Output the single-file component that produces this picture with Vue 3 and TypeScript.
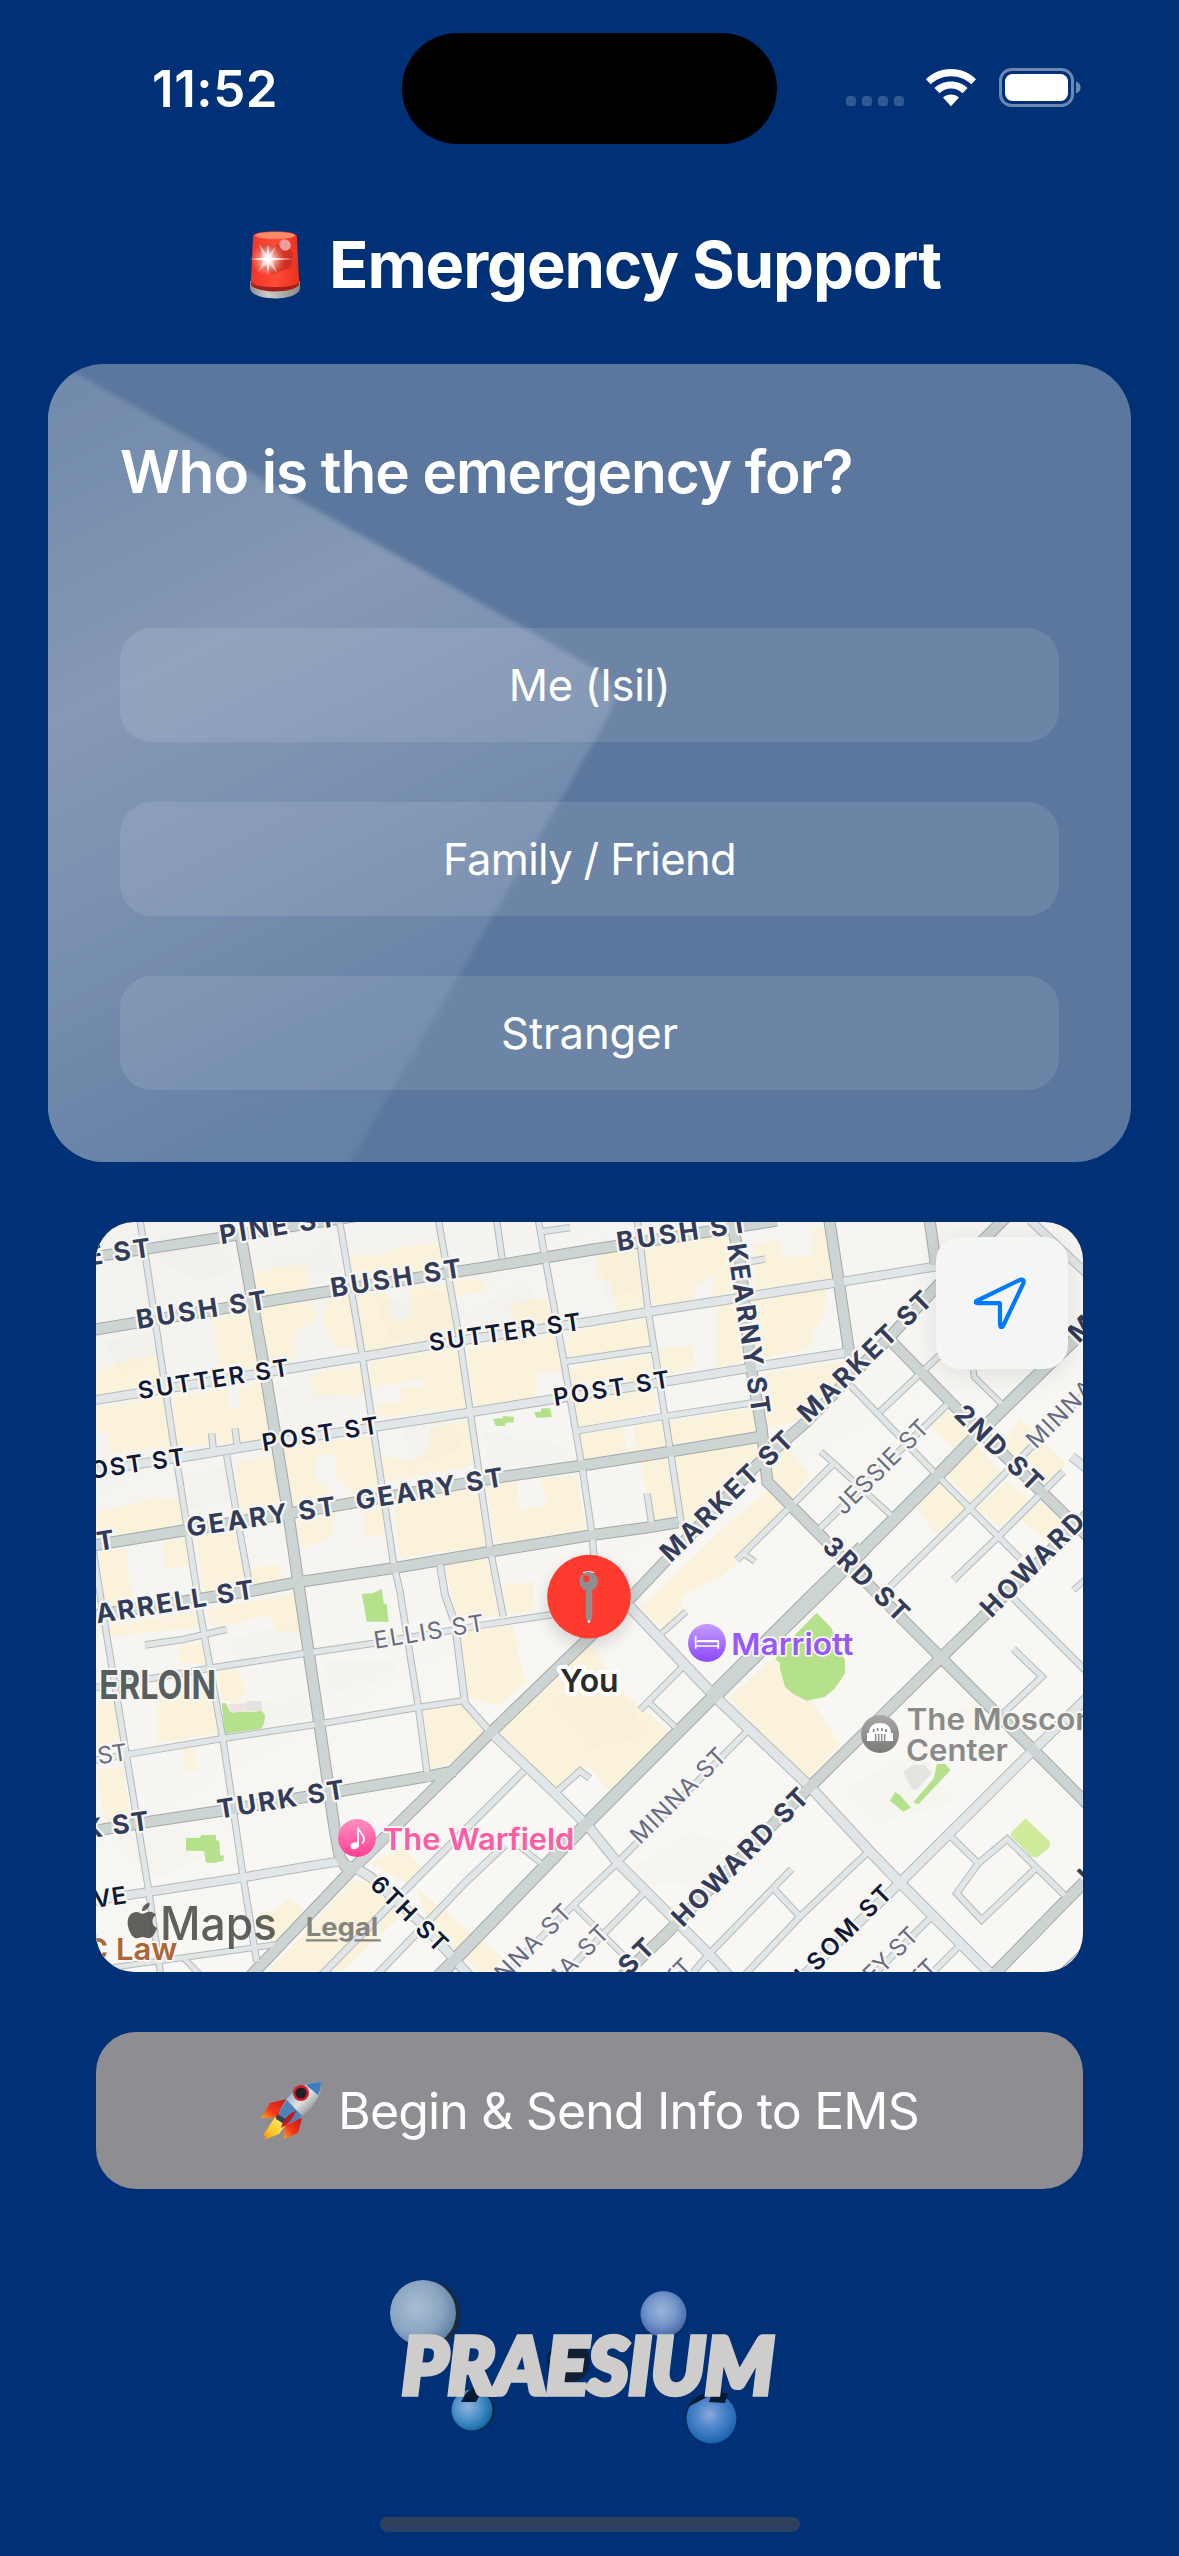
<script setup lang="ts">
type Tier = 'minor' | 'major'
interface Road { d: string; w: number; tier: Tier }
interface Label { t: string; x: number; y: number; a: number; len: number; kind: string }

const options: string[] = ['Me (Isil)', 'Family / Friend', 'Stranger']
const spacing: string[] = ['-.3px', '-.65px', '0px']

// Street geometry, three map units per pixel
const minor: [number, string][] = [
  [28, '0,558 820,425 1040,387 1500,320 1680,290 2240,203 2540,154'],
  [28, '0,770 300,723 500,690 860,635 1140,592 1500,535 1750,496 1970,460 2275,412'],
  [20, '0,1420 200,1388 370,1358 640,1316 850,1285 1180,1230 1420,1194'],
  [20, '0,1638 120,1617 400,1570 680,1528 980,1478 1125,1456'],
  [28, '0,2060 110,2041 460,1987 690,1948 745,1940 790,1958'],
  [18, '0,2268 120,2250 280,2228 560,2188'],
  [18, '280,2228 340,2290'],
  [20, '150,15 250,680 270,800 320,1125 330,1190 360,1355 400,1580 460,1990 500,2240'],
  [20, '748,15 815,410 910,1040 930,1130 985,1475 1015,1700'],
  [20, '1045,15 1110,380 1200,1000 1240,1205'],
  [20, '1220,15 1236,130'],
  [20, '1345,15 1360,100 1420,430 1480,780 1505,950 1515,1060'],
  [20, '365,655 370,705'],
  [20, '435,640 442,692'],
  [20, '410,720 440,900 475,1090'],
  [20, '1355,50 1440,38'],
  [20, '10,1010 45,1230 100,1565 175,2020 213,2285'],
  [20, '165,1290 280,1273 410,1243'],
  [22, '1050,1050 1065,1140 1095,1225 1125,1465 1200,1550'],
  [30, '1200,1550 1400,1740 1500,1840 1580,1940 1860,2220 1925,2290'],
  [32, '1600,1155 1875,1445 2160,1715 2340,1910 2430,2003 2715,2290'],
  [30, '790,1955 840,1985 1000,2130 1145,2290'],
  [20, '1395,1735 1470,1668 1500,1690'],
  [22, '690,2285 980,1990 1300,1670'],
  [22, '855,2285 1130,1998 1245,1890'],
  [18, '1290,1895 1360,1950'],
  [20, '1140,2380 1450,2070 1580,1945 1970,1550'],
  [18, '1450,2070 1610,2230'],
  [20, '1660,2035 1410,2290'],
  [20, '1650,1485 1782,1352'],
  [18, '1680,1465 1765,1545'],
  [18, '1715,1255 1788,1190'],
  [20, '1850,2225 2105,1962'],
  [20, '2050,2020 2130,2105'],
  [20, '1955,2290 2130,2105 2335,1910'],
  [20, '1785,2300 1850,2225'],
  [20, '2520,2110 2340,2290'],
  [20, '2610,2190 2510,2290'],
  [20, '2580,1862 2665,1945 2752,1872 2925,2042'],
  [20, '2665,1945 2600,2035 2675,2115 2835,1962'],
  [20, '2770,1302 2856,1385 2740,1495'],
  [20, '2770,1150 3000,1380'],
  [30, '2080,2340 2430,2003 2810,1625 3000,1440'],
  [18, '2650,465 2652,485 2740,572'],
  [26, '2820,15 3000,185'],
  [20, '2280,510 2540,780 2790,1030'],
  [18, '2192,710 2232,745 2408,905'],
  [20, '2232,745 1940,1035'],
  [18, '1960,1015 1995,1040'],
  [20, '2190,940 2575,565'],
  [20, '2370,590 2550,420'],
  [20, '2400,1115 2640,880 2820,700 3000,520'],
  [20, '2590,1095 2725,965 2920,770'],
  [28, '2945,725 3000,768'],
  [18, '2950,1125 3000,1082'],
  [20, '1640,0 1675,290 1740,700 1774,925'],
  [20, '1980,140 2025,132'],
  [20, '1425,440 1685,402'],
  [20, '1460,648 1730,603 1990,563'],
  [20, '1671,835 1685,925'],
]
const major: [number, string][] = [
  [32, '0,127 180,100 390,68 800,4'],
  [34, '0,346 620,244 1180,158 1500,105 1580,93 2060,17'],
  [34, '0,993 290,945 740,872 1240,785 1500,748 1740,710 2030,662'],
  [34, '0,1203 500,1125 620,1102 920,1058 1200,1010 1500,961 1670,938 1765,922'],
  [34, '0,1850 180,1820 390,1788 760,1727 1030,1681 1095,1668'],
  [34, '450,50 530,500 600,930 628,1125 655,1305 690,1540 735,1850 750,1930 775,1965'],
  [34, '475,2290 790,1960 1100,1655 1200,1555 1630,1140 2000,750 2150,620 2400,365 2540,215 2750,5'],
  [38, '1040,2290 1500,1815 1850,1465 2200,1125 2550,775 2700,620 2900,425 3000,330'],
  [48, '1862,1450 2190,1125 2320,1000'],
  [34, '1590,2290 1730,2155 2150,1725 2553,1328 2700,1185 3000,890'],
  [36, '2700,2290 2925,2060 3000,1985'],
  [34, '1922,10 1950,130 1980,440 2015,640 2032,800 2190,960 2430,1205 2553,1328 2840,1615 3000,1775'],
  [34, '2390,365 2600,580 2920,895 3000,970'],
  [34, '2217,10 2245,190 2280,430'],
  [34, '2518,10 2538,150'],
  [40, '2900,2300 3000,2205'],
]
const toRoad = (tier: Tier) => ([w, d]: [number, string]): Road => ({ w, d, tier })
const roads: Road[] = [...minor.map(toRoad('minor')), ...major.map(toRoad('major'))]

const blocks: string[] = [
  '495,170 650,145 655,215 740,222 500,260', '780,120 870,120 930,95 1050,80 1060,160 790,200',
  '1080,200 1180,190 1180,230 1090,245', '370,310 480,290 520,480 390,500',
  '500,270 670,260 680,310 620,350 615,440 540,460', '705,260 780,240 815,400 740,400 700,330',
  '800,240 890,230 910,315 960,310 960,215 1080,210 1110,370 830,415', '1260,265 1370,250 1400,320 1270,330',
  '18,470 130,430 210,420 225,530 18,560', '18,575 235,545 260,690 60,720 50,650 18,650',
  '250,545 410,520 415,580 450,580 450,515 520,500 545,670 260,700', '660,480 815,450 830,540 670,540',
  '840,440 1110,400 1145,575 860,610 860,570 930,560 935,515 1000,515 1000,490 840,520', '1130,400 1410,350 1430,470 1340,470 1340,550 1155,580',
  '570,700 840,660 880,820 790,840 735,780 735,720 680,720 670,785 735,840 600,870', '860,720 970,740 1020,700 1020,640 1135,615 1160,750 890,800',
  '440,740 550,720 590,880 450,900', '18,890 200,850 280,860 290,930 18,970',
  '25,1010 110,1000 120,1110 150,1180 40,1190', '220,980 285,970 300,1050 225,1060',
  '320,950 430,940 455,1060 560,1050 590,1100 340,1150', '620,920 740,890 720,970 630,1000',
  '820,880 880,870 890,960 820,970', '910,860 1170,820 1200,990 930,1030',
  '1190,810 1280,800 1290,885 1370,870 1350,790 1460,780 1490,950 1215,990', '1065,1050 1190,1030 1230,1200 1100,1220',
  '1240,1110 1335,1100 1330,1190 1250,1200', '1430,460 1680,420 1700,590 1465,640', '1470,660 1600,640 1610,705 1635,700 1630,635 1725,615 1740,690 1480,740',
  '1430,350 1680,310 1685,390 1430,430', '1700,400 1810,390 1815,460 1715,480', '1880,260 2210,220 2200,310 2170,350 2160,400 1880,460',
  '1520,120 1640,100 1660,280 1580,290 1560,200 1520,190', '1650,90 1930,40 1950,230 1860,245 1880,175 1820,210 1810,255 1690,275',
  '1990,90 2070,75 2080,130 2170,120 2165,40 2215,40 2240,190 1990,225', '2020,475 2270,440 2280,480 2170,610 2020,640', '1730,620 1990,580 2000,650 1745,690',
  '1650,740 1730,730 1760,900 1690,920', '1760,720 2000,685 2010,760 1790,960 1770,900',
  '2040,820 2110,880 1960,1030 1900,1080 1780,1140 1770,1180 1800,1180 1715,1240 1650,1180 1920,920', '2090,690 2160,780 2100,860 2030,790',
  '2050,1330 2150,1430 2250,1590 2150,1700 1915,1450', '1230,1550 1500,1290 1600,1430 1750,1560 1560,1735 1500,1660 1470,1655 1395,1725',
  '1115,1250 1270,1230 1290,1340 1310,1400 1230,1470 1130,1450', '1000,1485 1120,1470 1190,1555 1090,1640 1020,1665',
  '380,1365 445,1365 470,1430 440,1465 395,1455', '200,1430 375,1430 390,1555 200,1585', '18,1465 100,1465 110,1565 18,1615',
  '18,1240 160,1215 330,1190 340,1235 140,1255 45,1270', '350,1185 610,1135 630,1250 560,1250 540,1200 410,1230 360,1230',
  '270,1285 340,1285 350,1350 270,1340', '280,1600 315,1605 320,1665 285,1670', '18,1665 100,1655 120,1815 50,1825',
  '840,1945 940,1900 1010,1970 960,2010', '500,2095 560,2085 600,2045 640,2085 560,2180', '790,1995 840,2000 950,2085 750,2275 530,2275',
  '980,2020 1240,2230 1180,2280 1110,2220 1010,2120', '2570,780 2660,690 2750,790 2650,870', '2740,690 2790,610 2930,750 2860,830',
  '2480,880 2550,800 2630,880 2540,960', '2660,880 2750,800 2820,850 2730,940', '2790,910 2850,860 2920,920 2880,990', '2520,630 2560,580 2640,660 2590,700',
]
// Terrain facets give the land its faint relief
const facets: string[] = [
  '200,60 390,90 440,160 330,200 210,140', '520,120 650,130 720,60 740,180 560,170', '40,380 180,350 200,420 90,470',
  '560,520 790,540 820,590 600,650', '860,260 1060,230 1090,330 900,380', '1130,300 1300,200 1380,300 1200,360',
  '300,780 410,760 420,860 300,880', '940,620 1090,590 1110,700 960,760', '1180,650 1420,690 1440,740 1200,760',
  '420,1270 620,1220 630,1310 430,1340', '700,1340 940,1330 900,1390 720,1440', '420,1480 650,1430 660,1510 440,1560',
  '60,1870 260,1840 400,1900 200,1990', '1380,1450 1560,1400 1680,1560 1500,1600', '1560,2000 1800,1850 1960,1900 1820,2010',
  '2250,1730 2480,1600 2600,1760 2350,1830', '2570,1500 2700,1440 2760,1500 2640,1600', '1530,60 1660,140 1640,230 1540,250',
]
const parks: string[] = [
  '1210,612 1238,610 1240,603 1272,606 1270,622 1247,623 1245,633 1217,632', '1332,592 1352,590 1354,580 1380,580 1386,606 1340,609',
  '815,1137 850,1134 875,1122 881,1165 890,1168 896,1220 830,1220 821,1168', '395,1465 408,1465 420,1490 495,1490 515,1487 525,1500 523,1522 515,1540 405,1557',
  '288,1870 330,1868 334,1860 378,1860 378,1875 388,1878 390,1920 402,1922 400,1937 376,1943 348,1943 342,1908 288,1907',
  '2180,1193 2225,1240 2240,1290 2265,1335 2265,1375 2235,1420 2205,1445 2150,1457 2110,1437 2085,1415 2070,1360 2070,1345 2055,1332 2120,1255',
  '2540,1647 2565,1647 2582,1665 2485,1768 2470,1762 2532,1690', '2415,1731 2432,1742 2462,1778 2440,1790 2400,1757',
]

const raw: [string, string, number, number, number, number][] = [
  ['road', 'E ST', -6, 152, 185, 125], ['road', 'PINE ST', 393, 88, 742, 33],
  ['road', 'BUSH ST', 143, 342, 534, 281], ['road', 'BUSH ST', 726, 247, 1118, 186], ['road', 'BUSH ST', 1584, 109, 1977, 50],
  ['dark', 'SUTTER ST', 148, 553, 600, 482], ['dark', 'SUTTER ST', 1021, 409, 1475, 344],
  ['dark', 'POST ST', 520, 709, 868, 655], ['dark', 'OST ST', 3, 792, 288, 750], ['dark', 'POST ST', 1394, 573, 1742, 517],
  ['road', 'GEARY ST', 294, 965, 740, 900], ['road', 'GEARY ST', 802, 885, 1243, 813], ['road', 'T', 25, 1008, 75, 1000],
  ['road', 'ARRELL ST', 22, 1225, 495, 1150], ['light', 'ELLIS ST', 856, 1301, 1185, 1247],
  ['light', 'ST', 26, 1648, 115, 1635], ['road', 'K ST', -16, 1871, 180, 1844], ['road', 'TURK ST', 386, 1811, 767, 1750],
  ['dark', 'VE', 14, 2079, 112, 2064], ['dark', '6TH ST', 836, 2012, 1044, 2216],
  ['light', 'INNA ST', 1227, 2320, 1450, 2097], ['light', 'MA ST', 1385, 2337, 1562, 2160], ['light', 'ST', 1760, 2312, 1812, 2260],
  ['road', 'ST', 1617, 2285, 1699, 2203], ['light', 'MINNA ST', 1650, 1891, 1914, 1628], ['road', 'HOWARD ST', 1778, 2140, 2162, 1752],
  ['dark', 'LSOM ST', 2145, 2308, 2410, 2040], ['light', 'EY ST', 2348, 2308, 2490, 2166], ['light', 'ST', 2493, 2316, 2547, 2262],
  ['road', 'H', 2997, 2012, 3040, 1969], ['road', 'KEARNY ST', 1911, 89, 1986, 600],
  ['road', 'MARKET ST', 2155, 627, 2532, 262], ['road', 'MARKET ST', 1742, 1045, 2116, 682],
  ['light', 'JESSIE ST', 2262, 903, 2522, 643], ['road', '2ND ST', 2588, 603, 2826, 834], ['road', '3RD ST', 2193, 998, 2426, 1226],
  ['road', 'HOWARD', 2704, 1211, 2990, 925], ['light', 'MINNA', 2838, 704, 3018, 524], ['road', 'M', 2966, 387, 3020, 333],
]
const labels: Label[] = raw.map(([kind, t, x, y, x2, y2]) => ({
  kind, t, x, y,
  a: (Math.atan2(y2 - y, x2 - x) * 180) / Math.PI,
  len: Math.hypot(x2 - x, y2 - y),
}))
</script>

<template>
  <div class="screen">
    <header class="status">
      <span class="time">11:52</span>
      <span class="island"></span>
      <span class="signals">
        <svg class="dots" width="58" height="10" viewBox="0 0 58 10">
          <rect v-for="i in 4" :key="i" :x="(i - 1) * 16" y="0" width="10" height="10" rx="3.5" fill="#335990" />
        </svg>
        <svg class="wifi" width="50" height="38" viewBox="0 0 50 38" fill="#fff">
          <path d="M25 0C35 0 44 4 50 10.3l-4.700 5C40 10.300 33 7.200 25 7.200S10 10.300 4.700 15.300L0 10.300C6 4 15 0 25 0Z" />
          <path d="M25 12.500c6.500 0 12.300 2.500 16.500 6.500l-5 5.200c-3-2.800-7-4.600-11.500-4.600s-8.500 1.800-11.500 4.600l-5-5.200c4.200-4 10-6.500 16.500-6.500Z" />
          <path d="M25 25.500c3 0 5.800 1.100 8 3L25 37.300l-8-8.800c2.200-1.900 5-3 8-3Z" />
        </svg>
        <svg class="battery" width="82" height="39" viewBox="0 0 82 39">
          <rect x="1.500" y="1.500" width="72" height="36" rx="11" fill="none" stroke="#6d89b2" stroke-width="3" />
          <rect x="6" y="6" width="63" height="27" rx="7.500" fill="#fff" />
          <path d="M77 13.500c3 1 4.500 3.300 4.500 6s-1.500 5-4.500 6Z" fill="#6d89b2" />
        </svg>
      </span>
    </header>

    <h1 class="title">
      <svg class="siren" width="52" height="68" viewBox="0 0 52 68">
        <defs>
          <linearGradient id="glass" x1="0" y1="0" x2="1" y2="0">
            <stop offset="0" stop-color="#f0352a" /><stop offset=".5" stop-color="#ff4a35" /><stop offset="1" stop-color="#e8321f" />
          </linearGradient>
          <linearGradient id="base" x1="0" y1="0" x2="1" y2="0">
            <stop offset="0" stop-color="#8e8c8b" /><stop offset=".35" stop-color="#cfcdcb" /><stop offset="1" stop-color="#8b8987" />
          </linearGradient>
          <radialGradient id="flare"><stop offset="0" stop-color="#fff" /><stop offset=".35" stop-color="#ffd5d0" stop-opacity=".8" /><stop offset="1" stop-color="#ff8878" stop-opacity="0" /></radialGradient>
        </defs>
        <path d="M1 50h50v7c0 6-11 10.500-25 10.500S1 63 1 57Z" fill="url(#base)" />
        <path d="M2 46h48v7c0 4-11 7.500-24 7.500S2 57 2 53Z" fill="#a5201a" />
        <path d="M4 6C4 2 12 .5 26 .5S48 2 48 6l2 44c0 4-11 6-24 6S2 54 2 50Z" fill="url(#glass)" />
        <ellipse cx="26" cy="4.500" rx="20" ry="3.500" fill="#ff8a68" />
        <path d="M8 20q8-12 18-5l8-5 10 12-2 15-10 3-8 4-12-8Z" fill="#b52a1e" opacity=".6" />
        <ellipse cx="36" cy="14" rx="6" ry="5.500" fill="#f39a9c" transform="rotate(40 36 14)" />
        <circle cx="19" cy="28" r="17" fill="url(#flare)" />
        <path d="M0 28l17-1.500 2-13.500 2 13.500 23 1.500-23 1.500-2 14-2-14Z" fill="#fff" opacity=".8" />
        <path d="M10 13l9 12 8-10-5 12 6 15-9-11-10 10 6-13Z" fill="#fff" opacity=".55" />
      </svg>
      <span>Emergency Support</span>
    </h1>

    <section class="card">
      <svg class="sheen" width="1083" height="798" viewBox="0 0 1083 798">
        <defs>
          <linearGradient id="sheen" gradientUnits="userSpaceOnUse" x1="0" y1="0" x2="345" y2="706">
            <stop offset="0" stop-color="#7089aa" /><stop offset=".2" stop-color="#7990af" /><stop offset=".41" stop-color="#8699b6" />
            <stop offset=".66" stop-color="#7990b0" /><stop offset="1" stop-color="#6581a5" />
          </linearGradient>
          <filter id="feather"><feGaussianBlur stdDeviation="2.500" /></filter>
        </defs>
        <path d="M-20-2L12 0L482 267L542 302Q576 322 563 346L546 378L411 611L303 796L295 820H-20Z" fill="url(#sheen)" filter="url(#feather)" />
      </svg>
      <h2 class="question">Who is the emergency for?</h2>
      <div class="options">
        <button v-for="(o, i) in options" :key="o" class="option" :style="{ letterSpacing: spacing[i] }">{{ o }}</button>
      </div>
    </section>

    <section class="map">
      <svg class="tiles" width="987" height="750" viewBox="18 21 2961 2250">
        <defs>
          <linearGradient id="venue" x1="0" y1="0" x2="0" y2="1"><stop offset="0" stop-color="#ff8fc0" /><stop offset="1" stop-color="#ff3f95" /></linearGradient>
          <linearGradient id="hotel" x1="0" y1="0" x2="0" y2="1"><stop offset="0" stop-color="#c39cff" /><stop offset="1" stop-color="#8d48fa" /></linearGradient>
          <linearGradient id="hall" x1="0" y1="0" x2="0" y2="1"><stop offset="0" stop-color="#aaa8a6" /><stop offset="1" stop-color="#7c7a78" /></linearGradient>
          <linearGradient id="land" x1="0" y1="0" x2=".5" y2=".7"><stop offset="0" stop-color="#f3f2ef" /><stop offset="1" stop-color="#f8f7f3" /></linearGradient>
          <filter id="soft" x="-30%" y="-30%" width="160%" height="160%"><feGaussianBlur stdDeviation="22" /></filter>
        </defs>
        <rect x="0" y="0" width="3000" height="2300" fill="url(#land)" />
        <polygon v-for="b in blocks" :key="b" :points="b" fill="#fbf2dc" />
        <polygon v-for="f in facets" :key="f" :points="f" fill="#8d8870" opacity=".02" />
        <polygon v-for="p in parks" :key="p" :points="p" fill="#b5e08c" />
        <polygon points="2807,1810 2880,1880 2878,1898 2840,1928 2825,1925 2762,1862 2765,1850" fill="#d1eb9c" />
        <polygon points="415,1468 470,1464 472,1485 425,1495" fill="#f0e3e3" />
        <polygon points="470,1458 515,1458 515,1488 470,1488" fill="#e2e3df" />
        <polygon points="2440,1672 2470,1648 2505,1650 2524,1675 2480,1725 2465,1720" fill="#e4e5e1" />

        <g fill="none" stroke-linejoin="miter">
          <polyline v-for="(r, i) in roads" :key="'c' + i" :points="r.d" :stroke-width="r.w + 2" :stroke="r.tier === 'major' ? '#a3a9a9' : '#b4baba'" />
          <polyline v-for="(r, i) in roads" :key="'f' + i" :points="r.d" :stroke-width="r.w - 4" :stroke="r.tier === 'major' ? '#cdd4d4' : '#e1e7e8'" />
        </g>

        <text
          v-for="(l, i) in labels" :key="'l' + i" :class="['street', l.kind]" :x="l.x" :y="l.y"
          :textLength="l.len" :transform="`rotate(${l.a} ${l.x} ${l.y})`"
        >{{ l.t }}</text>

        <text class="area" x="28" y="1452" textLength="350" lengthAdjust="spacingAndGlyphs">ERLOIN</text>

        <g>
          <circle cx="801" cy="1869" r="57" fill="url(#venue)" />
          <ellipse cx="794" cy="1892" rx="13" ry="10" fill="#fff" transform="rotate(-15 794 1892)" />
          <path d="M804 1892V1837c3 16 20 20 18 38-1 6-4 9-6 11" fill="none" stroke="#fff" stroke-width="5.500" />
          <text class="poi" x="879" y="1905" textLength="574" lengthAdjust="spacingAndGlyphs" fill="#fc5da6">The Warfield</text>
        </g>
        <g>
          <circle cx="1851" cy="1284" r="57" fill="url(#hotel)" />
          <path d="M1817 1263v38M1817 1293h68v8M1885 1293v-14" fill="none" stroke="#fff" stroke-width="5" />
          <path d="M1820 1282h67v-4q0-3-4-3h-58q-5 0-5 5Z" fill="#fff" />
          <path d="M1824 1275h11q2 0 2 3h-13Z" fill="#fff" />
          <text class="poi" x="1924" y="1320" textLength="366" lengthAdjust="spacingAndGlyphs" fill="#9658fa">Marriott</text>
        </g>
        <g>
          <circle cx="2370" cy="1557" r="57" fill="url(#hall)" />
          <path d="M2331 1578v-24h6c0-20 13-30 33-30s33 10 33 30h6v24Z" fill="#fff" />
          <path d="M2357 1557v21M2366 1557v21M2375 1557v21M2384 1557v21" stroke="#8b8987" stroke-width="4.500" />
          <path d="M2351 1542v9M2363 1539v9M2376 1539v9M2388 1542v9" stroke="#8b8987" stroke-width="5" />
          <text class="poi" x="2450" y="1545" textLength="563" lengthAdjust="spacingAndGlyphs" fill="#8a8a89">The Moscon</text>
          <text class="poi" x="2448" y="1638" textLength="306" lengthAdjust="spacingAndGlyphs" fill="#8a8a89">Center</text>
        </g>
        <text class="poi" x="-14" y="2235" textLength="276" lengthAdjust="spacingAndGlyphs" fill="#ab6537">C Law</text>

        <g fill="#4c4c48" opacity=".88">
          <path d="M179 2063c1 13-10 25-23 25-1-12 10-24 23-25Z" />
          <path d="M157 2096c6 0 12-6 22-6 9 0 15 5 19 10-14 8-15 31 3 39-5 16-15 31-25 31-7 0-10-4-18-4s-11 4-18 4c-14 0-27-28-27-47 0-20 12-32 26-32 8 0 13 5 18 5Z" />
          <text class="brand" x="210" y="2175" textLength="351" lengthAdjust="spacingAndGlyphs">Maps</text>
        </g>
        <text class="legal" x="647" y="2162" textLength="218" lengthAdjust="spacingAndGlyphs">Legal</text>
        <path d="M648 2176h95M793 2176h79" stroke="#858580" stroke-width="7" />

        <circle cx="1497" cy="1165" r="128" fill="#000" opacity=".13" filter="url(#soft)" />
        <circle cx="1497" cy="1145" r="125.500" fill="#ff3b30" />
        <path d="M1485 1090h24v118q-5 10-12 14q-8-4-12-14Z" transform="translate(299.400 0) scale(.8 1)" fill="#8e8e93" />
        <circle cx="1496" cy="1099" r="28" fill="#8e8e93" />
        <path d="M1479 1073q17-8 34 0" fill="none" stroke="#fff" stroke-width="3" />
        <circle cx="1489" cy="1091" r="10" fill="#ff3b30" />
        <circle cx="1497" cy="1220" r="4" fill="#fff" />
        <text class="you" x="1410" y="1432" textLength="176" lengthAdjust="spacingAndGlyphs">You</text>
      </svg>
      <button class="locate">
        <svg width="52" height="52" viewBox="0 0 52 52">
          <path d="M2.500 24L46 2.800Q50.500 1.500 49.500 6L29 49Q26.700 52 26 48V27Q26 26 25 26L4 26.200Q0 25.800 2.500 24Z" fill="none" stroke="#007aff" stroke-width="4.200" stroke-linejoin="round" />
        </svg>
      </button>
    </section>

    <button class="send">
      <svg class="rocket" width="62" height="60" viewBox="0 0 62 60">
        <defs>
          <linearGradient id="hull" x1="0" y1="0" x2="1" y2="1"><stop offset=".1" stop-color="#5c92c9" /><stop offset=".5" stop-color="#dfe3e2" /><stop offset=".85" stop-color="#6b6f70" /></linearGradient>
          <linearGradient id="fin" x1="1" y1="0" x2="0" y2="1"><stop offset="0" stop-color="#c91313" /><stop offset=".6" stop-color="#f2371c" /><stop offset="1" stop-color="#ffa21c" /></linearGradient>
          <linearGradient id="flame" x1="1" y1="0" x2="0" y2="1"><stop offset="0" stop-color="#fff07a" /><stop offset=".6" stop-color="#ffc928" /><stop offset="1" stop-color="#f08a10" /></linearGradient>
        </defs>
        <path d="M27 18L10 22L1 37L20 37Z" fill="url(#fin)" />
        <path d="M42 37L38 52L24 58L25 42Z" fill="url(#fin)" />
        <path d="M15 36l10 9-6 8-15 6 2-3-3-2 3-4Z" fill="url(#flame)" />
        <path d="M61 1C46 1 33 8 24 22c-3 5-5 9-6 14l8 7c6-1 11-4 16-8C54 26 61 16 61 1Z" fill="url(#hull)" />
        <path d="M61 1c-6 0-11 1-15 3l12 10c2-4 3-9 3-13Z" fill="#3f7dbb" />
        <path d="M27 19c-5 6-8 12-9 17l8 7c6-1 11-4 16-8Z" fill="#4f83b8" />
        <path d="M36 30C29 32 23 39 21 47c7-4 12-9 15-17Z" fill="#c8141a" />
        <path d="M17 33l9 5-3 4-7-4Z" fill="#38424c" />
        <circle cx="41" cy="12" r="8" fill="#d81f26" /><circle cx="41" cy="12" r="5.600" fill="#1d2127" />
      </svg>
      <span>Begin &amp; Send Info to EMS</span>
    </button>

    <footer class="brandmark">
      <svg width="430" height="200" viewBox="0 0 430 200">
        <defs>
          <radialGradient id="b1" cx=".4" cy=".42" r=".65"><stop offset="0" stop-color="#a9bdd0" /><stop offset=".6" stop-color="#8ba6c2" /><stop offset="1" stop-color="#5b7fa3" /></radialGradient>
          <radialGradient id="b2" cx=".46" cy=".42" r=".6"><stop offset="0" stop-color="#9db3d8" /><stop offset=".5" stop-color="#7799cc" /><stop offset="1" stop-color="#4468a8" /></radialGradient>
          <radialGradient id="b3" cx=".4" cy=".42" r=".65"><stop offset="0" stop-color="#8fb4dc" /><stop offset=".5" stop-color="#4e90c8" /><stop offset="1" stop-color="#0a639f" /></radialGradient>
          <radialGradient id="b4" cx=".46" cy=".42" r=".6"><stop offset="0" stop-color="#8fa9d8" /><stop offset=".4" stop-color="#5489cd" /><stop offset="1" stop-color="#1761ae" /></radialGradient>
        </defs>
        <circle cx="57" cy="54" r="33.500" fill="#1c2b3c" /><circle cx="53" cy="53" r="33" fill="url(#b1)" />
        <circle cx="294" cy="55" r="23" fill="#0c2850" /><circle cx="293.500" cy="54" r="23" fill="url(#b2)" />
        <circle cx="198.500" cy="101" r="21.500" fill="#101f36" /><path d="M181 108Q177 96 186 86v14Z" fill="#5277b4" />
        <circle cx="104" cy="150" r="21" fill="#082544" /><circle cx="102" cy="150" r="20.500" fill="url(#b3)" />
        <circle cx="341" cy="158" r="25.500" fill="#0b2550" /><circle cx="341.500" cy="158.500" r="25" fill="url(#b4)" />
        <path d="M91 142q4-10 12-14h8q-1 8-5 14ZM339 142l3-9h16l-3 10ZM318 147q4-8 13-12h10Z" fill="#021a33" />
        <text class="wordmark" x="32" y="133.500" textLength="372" lengthAdjust="spacingAndGlyphs">PRAESIUM</text>
      </svg>
    </footer>
    <div class="home"></div>
  </div>
</template>

<style>
body { margin: 0; background: #003076; }
</style>

<style scoped>
.screen {
  width: 1179px; height: 2556px; box-sizing: border-box; overflow: hidden;
  display: flex; flex-direction: column; align-items: center;
  background: #003076; color: #fff; font-family: Inter, "Liberation Sans", sans-serif;
}
button { border: 0; padding: 0; margin: 0; color: inherit; font-family: inherit; display: flex; align-items: center; justify-content: center; }
.status { width: 100%; height: 144px; padding-top: 33px; box-sizing: border-box; display: flex; flex: none; }
.time { width: 402px; padding-left: 152px; box-sizing: border-box; font-size: 51px; font-weight: 600; line-height: 111px; letter-spacing: .6px; }
.island { width: 375px; height: 111px; border-radius: 56px; background: #000; flex: none; }
.signals { display: flex; align-items: flex-start; padding-left: 69px; }
.dots { margin-top: 63px; margin-right: 22px; }
.wifi { margin-top: 36px; margin-right: 23px; }
.battery { margin-top: 35px; }
.title { margin: 0; width: 100%; height: 220px; box-sizing: border-box; padding-left: 249px; display: flex; align-items: flex-start; font-size: 65px; font-weight: 700; flex: none; }
.siren { margin: 87px 28px 0 0; flex: none; }
.title span { line-height: 80px; margin-top: 81px; white-space: nowrap; letter-spacing: -1.1px; }
.card { position: relative; width: 1083px; height: 798px; box-sizing: border-box; border-radius: 56px; overflow: hidden; background: #5b779d; padding: 72px; flex: none; }
.sheen { position: absolute; left: 0; top: 0; }
.question { position: relative; margin: 0; height: 192px; line-height: 72px; font-size: 58.500px; font-weight: 600; letter-spacing: -1.05px; white-space: nowrap; }
.options { position: relative; display: flex; flex-direction: column; gap: 60px; }
.option { height: 114px; border-radius: 32px; background: rgba(255, 255, 255, .105); font-size: 43.500px; font-weight: 400; }
.map { position: relative; width: 987px; height: 750px; margin-top: 60px; border-radius: 38px; overflow: hidden; flex: none; }
.tiles { display: block; }
.street { paint-order: stroke; stroke: #f7f6f2; stroke-linejoin: round; stroke-width: 14px; font-size: 79px; font-weight: 700; fill: #323c5a; }
.street.dark { fill: #101833; font-size: 72px; font-weight: 600; }
.street.light { fill: #656b82; font-size: 71px; font-weight: 400; }
.area { font-size: 118px; font-weight: 700; fill: #585e5e; stroke: #f7f6f2; stroke-width: 12px; paint-order: stroke; }
.poi { font-size: 90px; font-weight: 600; stroke: #f8f7f3; stroke-width: 10px; stroke-linejoin: round; paint-order: stroke; }
.brand { font-size: 138px; font-weight: 500; }
.legal { font-size: 75px; font-weight: 700; fill: #858580; }
.you { font-size: 95px; font-weight: 600; fill: #2b2b2b; stroke: #fff; stroke-width: 24px; stroke-linejoin: round; paint-order: stroke; }
.locate { position: absolute; right: 15px; top: 15px; width: 132px; height: 132px; padding-right: 5px; box-sizing: border-box; border-radius: 24px; background: #f5f5f5; box-shadow: 0 4px 28px rgba(0, 0, 0, .1); }
.send { width: 987px; height: 157px; margin-top: 60px; border-radius: 40px; background: #8e8d92; font-size: 50px; font-weight: 400; flex: none; }
.send span { white-space: nowrap; letter-spacing: -.85px; margin-left: 16px; }
.brandmark { width: 430px; height: 200px; margin-top: 71px; margin-right: 9px; flex: none; }
.wordmark { font-family: Lato, sans-serif; font-weight: 900; font-style: italic; font-size: 78px; fill: #cfcdcc; stroke: #cfcdcc; stroke-width: 5.500px; }
.home { width: 420px; height: 15px; margin-top: 57px; border-radius: 8px; background: linear-gradient(#34425a, #283e62); flex: none; }
</style>
